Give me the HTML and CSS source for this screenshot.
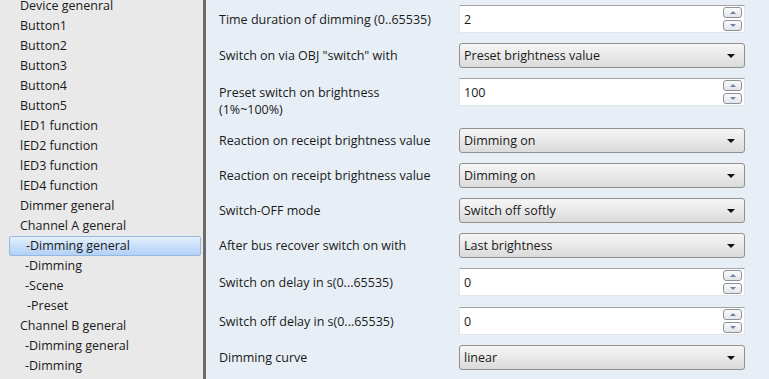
FILE: index.html
```html
<!DOCTYPE html>
<html lang="en">
<head>
    <meta charset="UTF-8">
    <title>Channel A - Dimming general</title>
    <link rel="stylesheet" href="styles.css">
</head>
<body>
    <div class="window">
        <ul class="tree">
            <li>Device genenral</li>
            <li>Button1</li>
            <li>Button2</li>
            <li>Button3</li>
            <li>Button4</li>
            <li>Button5</li>
            <li>lED1 function</li>
            <li>lED2 function</li>
            <li>lED3 function</li>
            <li>lED4 function</li>
            <li>Dimmer general</li>
            <li>Channel A general</li>
            <li class="sub selected">-Dimming general</li>
            <li class="sub">-Dimming</li>
            <li class="sub">-Scene</li>
            <li class="sub deep">-Preset</li>
            <li>Channel B general</li>
            <li class="sub">-Dimming general</li>
            <li class="sub">-Dimming</li>
        </ul>

        <div class="params">
            <div class="row">
                <div class="label">Time duration of dimming (0..65535)</div>
                <div class="spin"><span class="value">2</span><span class="buttons"><i class="up"></i><i class="down"></i></span></div>
            </div>
            <div class="row">
                <div class="label">Switch on via OBJ "switch" with</div>
                <div class="combo">Preset brightness value</div>
            </div>
            <div class="row top">
                <div class="label">Preset switch on brightness<br>(1%~100%)</div>
                <div class="spin"><span class="value">100</span><span class="buttons"><i class="up"></i><i class="down"></i></span></div>
            </div>
            <div class="row">
                <div class="label">Reaction on receipt brightness value</div>
                <div class="combo">Dimming on</div>
            </div>
            <div class="row">
                <div class="label">Reaction on receipt brightness value</div>
                <div class="combo">Dimming on</div>
            </div>
            <div class="row">
                <div class="label">Switch-OFF mode</div>
                <div class="combo">Switch off softly</div>
            </div>
            <div class="row">
                <div class="label">After bus recover switch on with</div>
                <div class="combo">Last brightness</div>
            </div>
            <div class="row">
                <div class="label">Switch on delay in s(0...65535)</div>
                <div class="spin"><span class="value">0</span><span class="buttons"><i class="up"></i><i class="down"></i></span></div>
            </div>
            <div class="row wide">
                <div class="label">Switch off delay in s(0...65535)</div>
                <div class="spin"><span class="value">0</span><span class="buttons"><i class="up"></i><i class="down"></i></span></div>
            </div>
            <div class="row">
                <div class="label">Dimming curve</div>
                <div class="combo">linear</div>
            </div>
        </div>
    </div>
</body>
</html>
```

FILE: styles.css
```css
body {
    margin: 0;
    font-family: "Open Sans", "Noto Sans", sans-serif;
    font-size: 12.5px;
    color: #1a1a1a;
}
.window {
    display: flex;
    height: 379px;
    overflow: hidden;
}
.tree {
    width: 203px;
    flex: none;
    margin: 0;
    padding: 0;
    list-style: none;
    background-color: #e9e9e9;
    border-right: 3px solid #6b6b6b;
}
.tree li {
    height: 20px;
    line-height: 20px;
    padding-left: 20px;
    white-space: nowrap;
}
.tree li:first-child {
    margin-top: -4px;
}
.tree li.sub {
    padding-left: 25px;
}
.tree li.deep {
    padding-left: 27px;
}
.tree li.selected {
    margin: 0 2px 0 9px;
    padding-left: 16px;
    height: 18px;
    line-height: 18px;
    border: 1px solid #94b8e2;
    border-radius: 2px;
    background: linear-gradient(#e6f0fc, #c3dbf8 60%, #b3d1f6);
}
.params {
    flex: 1;
    background-color: #e7eef5;
    padding: 5px 0 0 13px;
    display: flex;
    flex-direction: column;
    gap: 10px;
}
.row {
    display: flex;
    align-items: center;
}
.row.top {
    align-items: flex-start;
}
.row.top .label {
    padding-top: 6px;
    line-height: 17px;
}
.row.wide {
    margin-top: 1px;
}
.label {
    width: 240px;
    flex: none;
    white-space: nowrap;
}
.spin {
    width: 286px;
    height: 28px;
    box-sizing: border-box;
    display: flex;
    align-items: center;
    background-color: #fff;
    border: 1px solid #e1e6eb;
    border-top-color: #a3a3a3;
    padding: 0 2px 0 4px;
}
.spin .value {
    flex: 1;
}
.buttons {
    display: flex;
    flex-direction: column;
    gap: 2px;
}
.buttons i {
    position: relative;
    width: 17px;
    height: 9px;
    border: 1px solid #8d929a;
    border-radius: 3px;
    background: linear-gradient(#fbfbfb, #e2e4e8);
}
.buttons i::after {
    content: "";
    position: absolute;
    left: 6px;
    border-left: 3px solid transparent;
    border-right: 3px solid transparent;
}
.buttons .up::after {
    top: 3px;
    border-bottom: 3px solid #6f82a3;
}
.buttons .down::after {
    top: 3px;
    border-top: 3px solid #6f82a3;
}
.combo {
    position: relative;
    width: 286px;
    height: 25px;
    line-height: 23px;
    box-sizing: border-box;
    padding-left: 4px;
    border: 1px solid #8f9090;
    border-radius: 3px;
    background: linear-gradient(#f6f6f6, #e9e9e9 50%, #dadada);
}
.combo::after {
    content: "";
    position: absolute;
    right: 9px;
    top: 10px;
    border-left: 4px solid transparent;
    border-right: 4px solid transparent;
    border-top: 4px solid #111;
}
```
